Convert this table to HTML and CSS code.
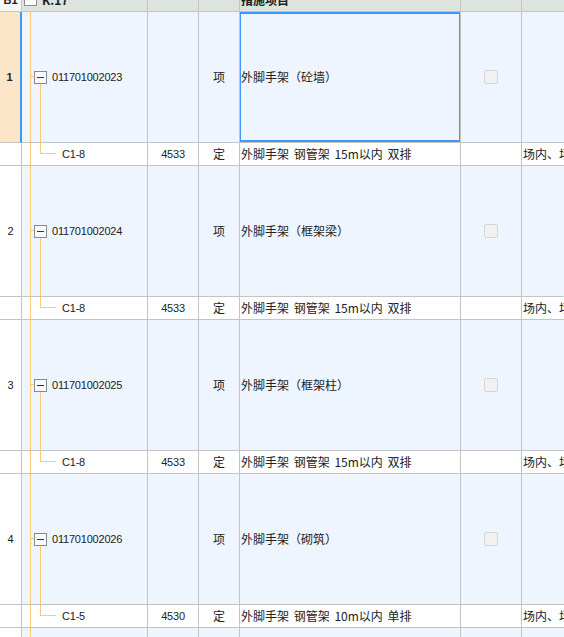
FILE: index.html
```html
<!DOCTYPE html>
<html lang="zh">
<head>
<meta charset="utf-8">
<link rel="stylesheet" href="styles.css">
</head>
<body>
<div class="grid">
  <div class="row head">
    <div class="c c0">B1</div>
    <div class="c c1"><span class="hbox"></span>K.17</div>
    <div class="c c2"></div>
    <div class="c c3"></div>
    <div class="c c4">措施项目</div>
    <div class="c c5"></div>
    <div class="c c6"></div>
  </div>

  <div class="row parent selected">
    <div class="c c0">1</div>
    <div class="c c1 tree-parent"><span class="minus"></span><span class="code">011701002023</span></div>
    <div class="c c2"></div>
    <div class="c c3 center">项</div>
    <div class="c c4 focus">外脚手架（砼墙）</div>
    <div class="c c5 center"><span class="chk"></span></div>
    <div class="c c6"></div>
  </div>
  <div class="row child">
    <div class="c c0"></div>
    <div class="c c1 tree-child"><span class="code">C1-8</span></div>
    <div class="c c2 center"><span class="code">4533</span></div>
    <div class="c c3 center">定</div>
    <div class="c c4">外脚手架 钢管架 15m以内 双排</div>
    <div class="c c5"></div>
    <div class="c c6">场内、场外运输</div>
  </div>

  <div class="row parent">
    <div class="c c0">2</div>
    <div class="c c1 tree-parent"><span class="minus"></span><span class="code">011701002024</span></div>
    <div class="c c2"></div>
    <div class="c c3 center">项</div>
    <div class="c c4">外脚手架（框架梁）</div>
    <div class="c c5 center"><span class="chk"></span></div>
    <div class="c c6"></div>
  </div>
  <div class="row child">
    <div class="c c0"></div>
    <div class="c c1 tree-child"><span class="code">C1-8</span></div>
    <div class="c c2 center"><span class="code">4533</span></div>
    <div class="c c3 center">定</div>
    <div class="c c4">外脚手架 钢管架 15m以内 双排</div>
    <div class="c c5"></div>
    <div class="c c6">场内、场外运输</div>
  </div>

  <div class="row parent">
    <div class="c c0">3</div>
    <div class="c c1 tree-parent"><span class="minus"></span><span class="code">011701002025</span></div>
    <div class="c c2"></div>
    <div class="c c3 center">项</div>
    <div class="c c4">外脚手架（框架柱）</div>
    <div class="c c5 center"><span class="chk"></span></div>
    <div class="c c6"></div>
  </div>
  <div class="row child">
    <div class="c c0"></div>
    <div class="c c1 tree-child"><span class="code">C1-8</span></div>
    <div class="c c2 center"><span class="code">4533</span></div>
    <div class="c c3 center">定</div>
    <div class="c c4">外脚手架 钢管架 15m以内 双排</div>
    <div class="c c5"></div>
    <div class="c c6">场内、场外运输</div>
  </div>

  <div class="row parent">
    <div class="c c0">4</div>
    <div class="c c1 tree-parent"><span class="minus"></span><span class="code">011701002026</span></div>
    <div class="c c2"></div>
    <div class="c c3 center">项</div>
    <div class="c c4">外脚手架（砌筑）</div>
    <div class="c c5 center"><span class="chk"></span></div>
    <div class="c c6"></div>
  </div>
  <div class="row child">
    <div class="c c0"></div>
    <div class="c c1 tree-child"><span class="code">C1-5</span></div>
    <div class="c c2 center"><span class="code">4530</span></div>
    <div class="c c3 center">定</div>
    <div class="c c4">外脚手架 钢管架 10m以内 单排</div>
    <div class="c c5"></div>
    <div class="c c6">场内、场外运输</div>
  </div>

  <div class="row parent">
    <div class="c c0">5</div>
    <div class="c c1 tree-parent"><span class="minus"></span><span class="code">011701002027</span></div>
    <div class="c c2"></div>
    <div class="c c3 center">项</div>
    <div class="c c4"></div>
    <div class="c c5 center"><span class="chk"></span></div>
    <div class="c c6"></div>
  </div>
</div>
</body>
</html>
```

FILE: styles.css
```css
html, body {
  margin: 0;
  padding: 0;
  background: #ffffff;
  overflow: hidden;
}
body {
  width: 564px;
  height: 637px;
  font-family: "Noto Sans CJK SC", "Liberation Sans", sans-serif;
  font-size: 12px;
  color: #222222;
}
.grid {
  margin-top: -12px;
  width: 700px;
}
.row {
  display: grid;
  grid-template-columns: 22px 126px 51px 41px 221px 61px 178px;
}
.c {
  box-sizing: border-box;
  border-right: 1px solid #c4c4c4;
  border-bottom: 1px solid #c4c4c4;
  display: flex;
  align-items: center;
  white-space: nowrap;
  overflow: hidden;
  position: relative;
  line-height: 14px;
}
.center { justify-content: center; }
.head .c {
  height: 24px;
  background: #dde4de;
  font-weight: bold;
}
.head .c0 {
  background: #f7f7f7;
  justify-content: center;
  font-size: 11px;
  font-family: "Liberation Sans", sans-serif;
}
.head .c1 { padding-left: 2px; }
.head .c4 { padding-left: 1px; }
.hbox {
  width: 11px;
  height: 11px;
  border: 1px solid #8f8f8f;
  background: #ffffff;
  margin-right: 5px;
}
.parent .c {
  height: 131px;
  background: #eef5ff;
}
.child .c {
  height: 23px;
  background: #ffffff;
}
.c0 {
  justify-content: center;
  font-family: "Liberation Sans", sans-serif;
  font-size: 11px;
}
.parent .c0, .child .c0 { background: #ffffff; }
.selected .c0 {
  background: #fde5c9;
  border-right: 2px solid #3f98f5;
  font-weight: bold;
  padding-right: 1px;
}
.c4 { padding-left: 1px; word-spacing: 2px; }
.c6 { padding-left: 1px; }
.code {
  font-family: "Liberation Sans", sans-serif;
  font-size: 11px;
  letter-spacing: -0.2px;
}
.tree-parent {
  padding-left: 12px;
  background:
    linear-gradient(#ffc977, #ffc977) 8px 0 / 1px 100% no-repeat,
    linear-gradient(#ffc977, #ffc977) 8px 64px / 4px 1px no-repeat,
    linear-gradient(#ffc977, #ffc977) 18px 70px / 1px 61px no-repeat,
    #eef5ff !important;
}
.tree-child {
  padding-left: 40px;
  background:
    linear-gradient(#ffc977, #ffc977) 8px 0 / 1px 100% no-repeat,
    linear-gradient(#ffc977, #ffc977) 18px 0 / 1px 11px no-repeat,
    linear-gradient(#ffc977, #ffc977) 18px 10px / 16px 1px no-repeat,
    #ffffff !important;
}
.minus {
  width: 11px;
  height: 11px;
  border: 1px solid #8a8a8a;
  background: linear-gradient(#333, #333) center / 7px 1px no-repeat, #f7faff;
  margin-right: 5px;
  flex: none;
}
.focus::after {
  content: "";
  position: absolute;
  left: -1px;
  right: -1px;
  top: 0;
  bottom: 0;
  border: 2px solid #3f98f5;
}
.chk {
  width: 12px;
  height: 12px;
  border: 1px solid #d6d6d6;
  border-radius: 2px;
  background: #f1f1f1;
}
```
